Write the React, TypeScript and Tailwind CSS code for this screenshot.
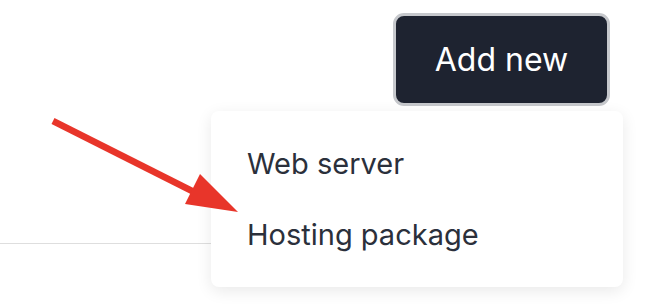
import React from "react";

export default function App() {
  return (
    <div
      className="relative w-[660px] h-[304px] overflow-hidden bg-white"
      style={{ fontFamily: "Inter, 'Noto Sans', sans-serif" }}
    >
      <div className="flex justify-end pt-[13px] pr-[50px]">
        <button className="flex h-[93px] w-[217px] items-center justify-center rounded-[11px] border-[3px] border-[#c6c8cc] bg-[#1e2330] text-[32px] text-white">
          Add new
        </button>
      </div>
      <div className="mt-[137px] h-px w-[400px] bg-[#dedede]" />

      <div className="absolute left-[211px] top-[111px] flex h-[176px] w-[412px] flex-col rounded-[8px] bg-white pl-[36px] pt-[33px] shadow-[0_4px_16px_rgba(0,0,0,0.09)]">
        <div className="text-[29px] leading-[40px] text-[#2b303b]">Web server</div>
        <div className="mt-[31px] text-[29px] leading-[40px] text-[#2b303b]">Hosting package</div>
      </div>

      <svg className="absolute left-0 top-0" width="660" height="304" viewBox="0 0 660 304">
        <line x1="53" y1="121" x2="200" y2="195" stroke="#e8352a" strokeWidth="6.5" strokeLinecap="butt" />
        <polygon points="185,204 200,174 238,212" fill="#e8352a" />
      </svg>
    </div>
  );
}
